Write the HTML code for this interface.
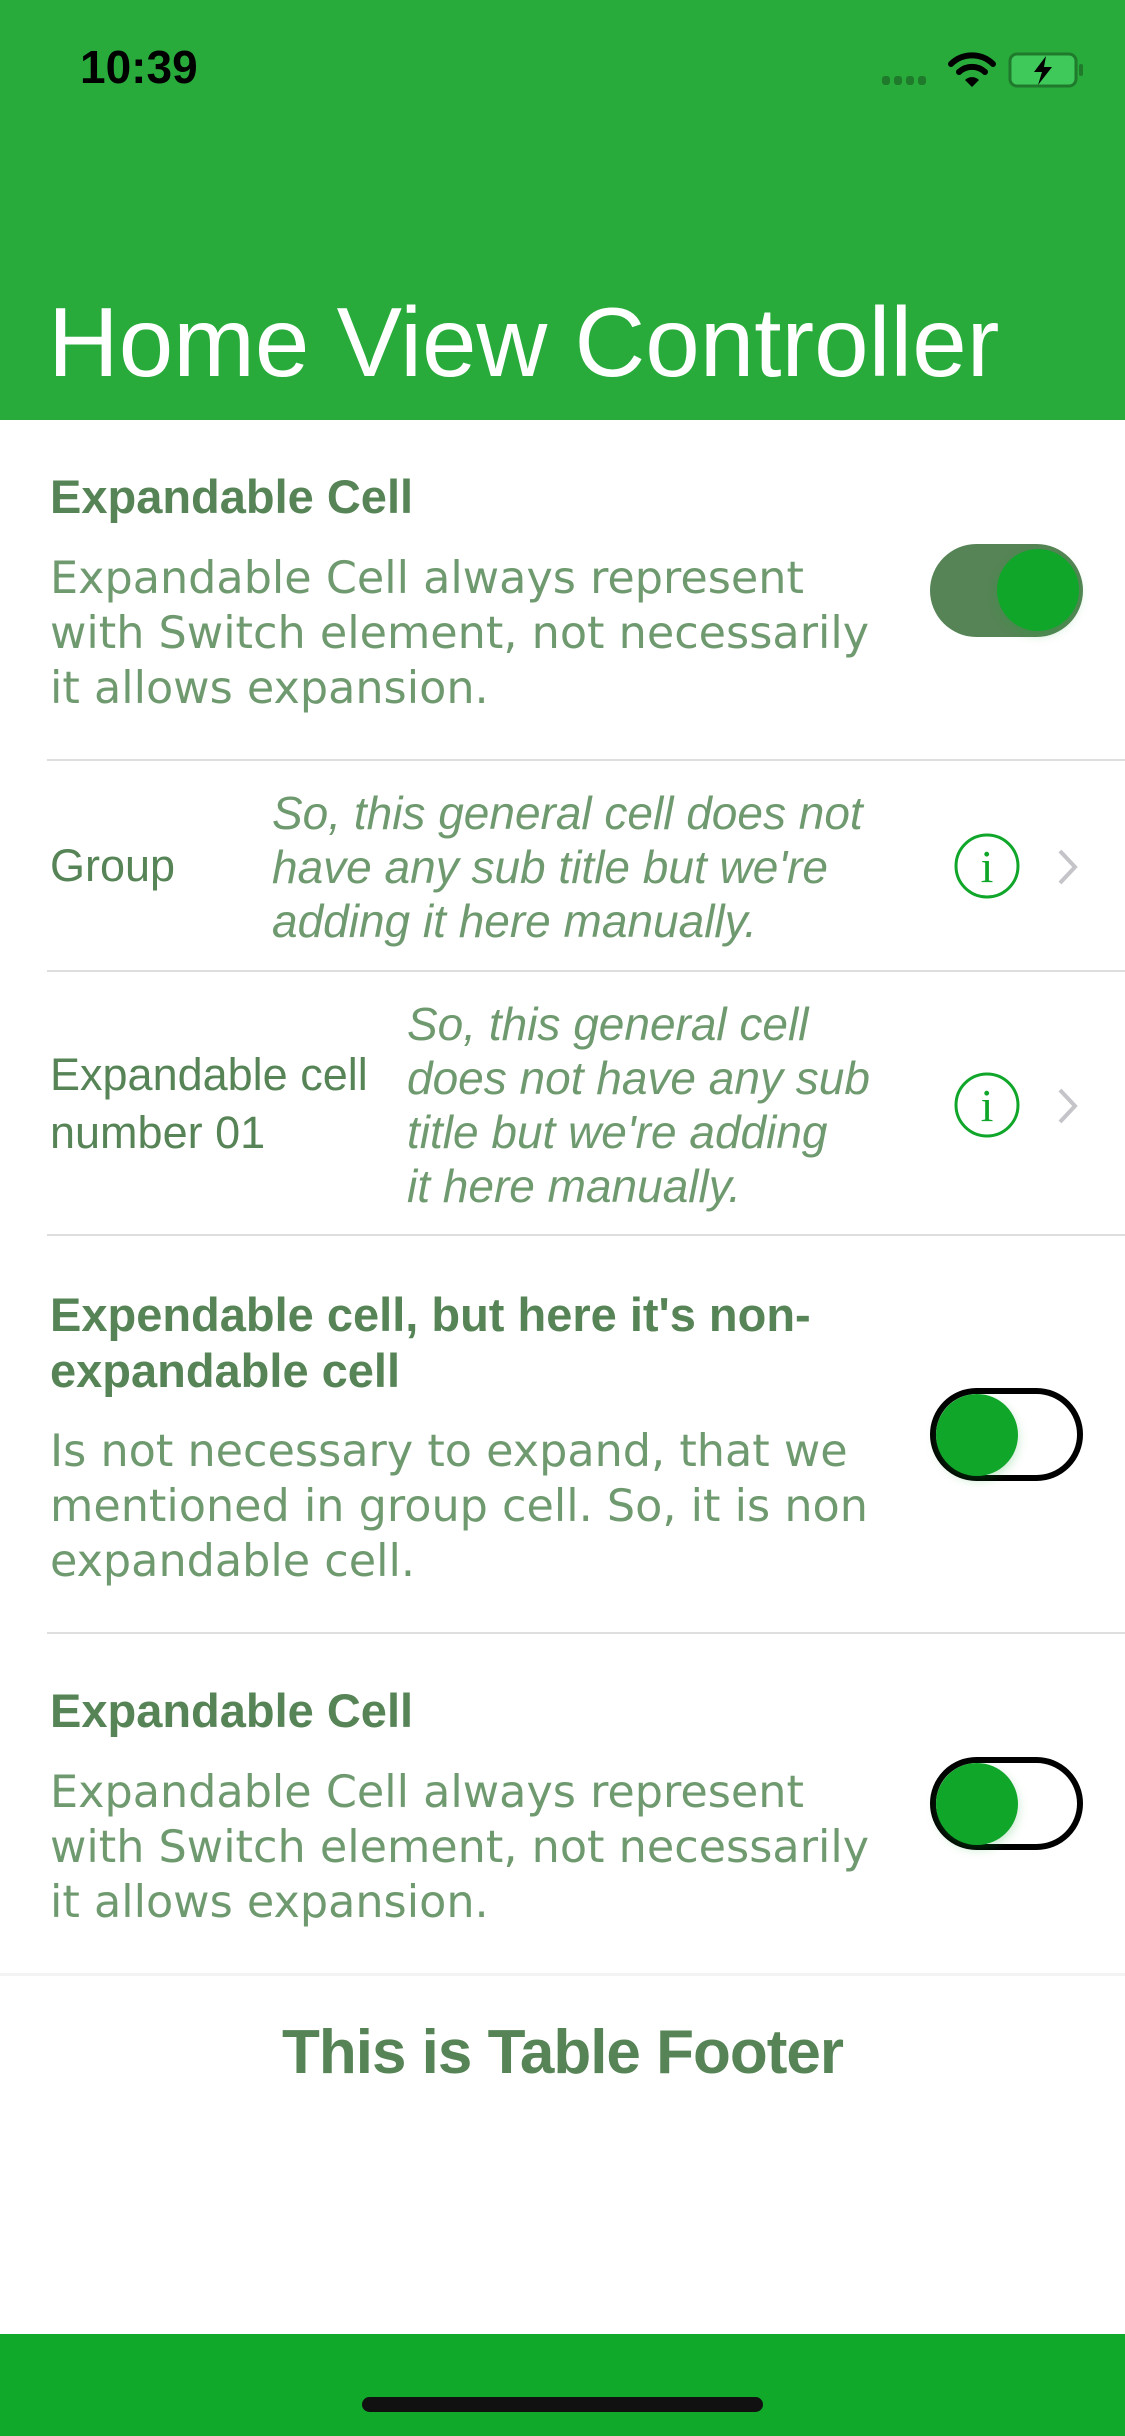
<!DOCTYPE html>
<html><head><meta charset="utf-8"><style>
*{margin:0;padding:0;box-sizing:border-box}
body{width:1125px;height:2436px;position:relative;background:#fff;font-family:"Liberation Sans",sans-serif;overflow:hidden}
.a{position:absolute;white-space:nowrap}
.nav{position:absolute;left:0;top:0;width:1125px;height:420px;background:#29ab3c}
.t{font-weight:bold;font-size:47px;color:#568456;line-height:56px}
.d{font-family:"DejaVu Sans",sans-serif;font-size:44.5px;color:#6f9a6f;line-height:55px}
.it{font-style:italic;font-size:46px;color:#6f9a6f;line-height:54px}
.r{font-size:45px;color:#568456;line-height:58px}
.sep{position:absolute;left:47px;right:0;height:2px;background:#dedede}
.sw{position:absolute;left:930px;width:153px;height:93px;border-radius:47px}
.on{background:#568456}
.off{border:6px solid #000;background:#fff}
.k{position:absolute;width:82px;height:82px;border-radius:50%;background:#10a62a;box-shadow:0 4px 10px rgba(16,166,42,.25)}
</style></head><body>
<div class="nav"></div>
<div class="a" style="left:80px;top:40px;font-size:46px;font-weight:bold;color:#000">10:39</div>
<div class="a" style="left:882px;top:76px;display:flex;gap:4px"><span style="width:8px;height:9px;border-radius:3px;background:#1f7a2c;display:block"></span><span style="width:8px;height:9px;border-radius:3px;background:#1f7a2c;display:block"></span><span style="width:8px;height:9px;border-radius:3px;background:#1f7a2c;display:block"></span><span style="width:8px;height:9px;border-radius:3px;background:#1f7a2c;display:block"></span></div>
<svg class="a" style="left:948px;top:50px" width="48" height="40" viewBox="0 0 48 40"><path d="M3 14 A30 30 0 0 1 45 14" stroke="#000" stroke-width="6" fill="none" stroke-linecap="round"/><path d="M11 22 A19 19 0 0 1 37 22" stroke="#000" stroke-width="6" fill="none" stroke-linecap="round"/><path d="M17 30 L24 37 L31 30 A10 10 0 0 0 17 30Z" fill="#000"/></svg>
<svg class="a" style="left:1008px;top:52px" width="78" height="36" viewBox="0 0 78 36"><rect x="2" y="2" width="66" height="32" rx="7" fill="#3fc95a" stroke="#1f7a2c" stroke-width="3"/><rect x="71" y="12" width="4" height="12" rx="2" fill="#1f7a2c"/><path d="M38 4 L26 20 L34 20 L30 33 L44 15 L36 15 Z" fill="#000"/></svg>
<div class="a" style="left:48px;top:282px;font-size:98px;color:#fff;line-height:120px">Home View Controller</div>

<div class="a t" style="left:50px;top:469px">Expandable Cell</div>
<div class="a d" style="left:50px;top:551px">Expandable Cell always represent<br>with Switch element, not necessarily<br>it allows expansion.</div>
<div class="sw on" style="top:544px"><div class="k" style="right:4px;top:5px"></div></div>
<div class="sep" style="top:759px"></div>

<div class="a r" style="left:50px;top:837px">Group</div>
<div class="a it" style="left:272px;top:786px">So, this general cell does not<br>have any sub title but we're<br>adding it here manually.</div>
<svg class="a" style="left:953px;top:832px" width="68" height="68" viewBox="0 0 68 68"><circle cx="34" cy="34" r="31" fill="none" stroke="#10a62a" stroke-width="3"/><text x="34" y="50" text-anchor="middle" font-family="Liberation Serif" font-size="46" fill="#10a62a">i</text></svg>
<svg class="a" style="left:1056px;top:848px" width="24" height="38" viewBox="0 0 24 38"><path d="M4 3 L19 19 L4 35" stroke="#c4c4c9" stroke-width="4" fill="none"/></svg>
<div class="sep" style="top:970px"></div>

<div class="a r" style="left:50px;top:1046px">Expandable cell<br>number 01</div>
<div class="a it" style="left:407px;top:997px">So, this general cell<br>does not have any sub<br>title but we're adding<br>it here manually.</div>
<svg class="a" style="left:953px;top:1071px" width="68" height="68" viewBox="0 0 68 68"><circle cx="34" cy="34" r="31" fill="none" stroke="#10a62a" stroke-width="3"/><text x="34" y="50" text-anchor="middle" font-family="Liberation Serif" font-size="46" fill="#10a62a">i</text></svg>
<svg class="a" style="left:1056px;top:1087px" width="24" height="38" viewBox="0 0 24 38"><path d="M4 3 L19 19 L4 35" stroke="#c4c4c9" stroke-width="4" fill="none"/></svg>
<div class="sep" style="top:1234px"></div>

<div class="a t" style="left:50px;top:1287px">Expendable cell, but here it's non-<br>expandable cell</div>
<div class="a d" style="left:50px;top:1424px">Is not necessary to expand, that we<br>mentioned in group cell. So, it is non<br>expandable cell.</div>
<div class="sw off" style="top:1388px"><div class="k" style="left:0;top:0"></div></div>
<div class="sep" style="top:1632px"></div>

<div class="a t" style="left:50px;top:1683px">Expandable Cell</div>
<div class="a d" style="left:50px;top:1765px">Expandable Cell always represent<br>with Switch element, not necessarily<br>it allows expansion.</div>
<div class="sw off" style="top:1757px"><div class="k" style="left:0;top:0"></div></div>
<div style="position:absolute;left:0;right:0;top:1973px;height:3px;background:#f3f3f3"></div>

<div class="a" style="left:0;width:1125px;text-align:center;top:2018px;font-size:62px;font-weight:bold;color:#568456;letter-spacing:-1px;line-height:70px">This is Table Footer</div>

<div style="position:absolute;left:0;top:2334px;width:1125px;height:102px;background:#10a92a"></div>
<div style="position:absolute;left:362px;top:2397px;width:401px;height:15px;border-radius:8px;background:#111"></div>
</body></html>
